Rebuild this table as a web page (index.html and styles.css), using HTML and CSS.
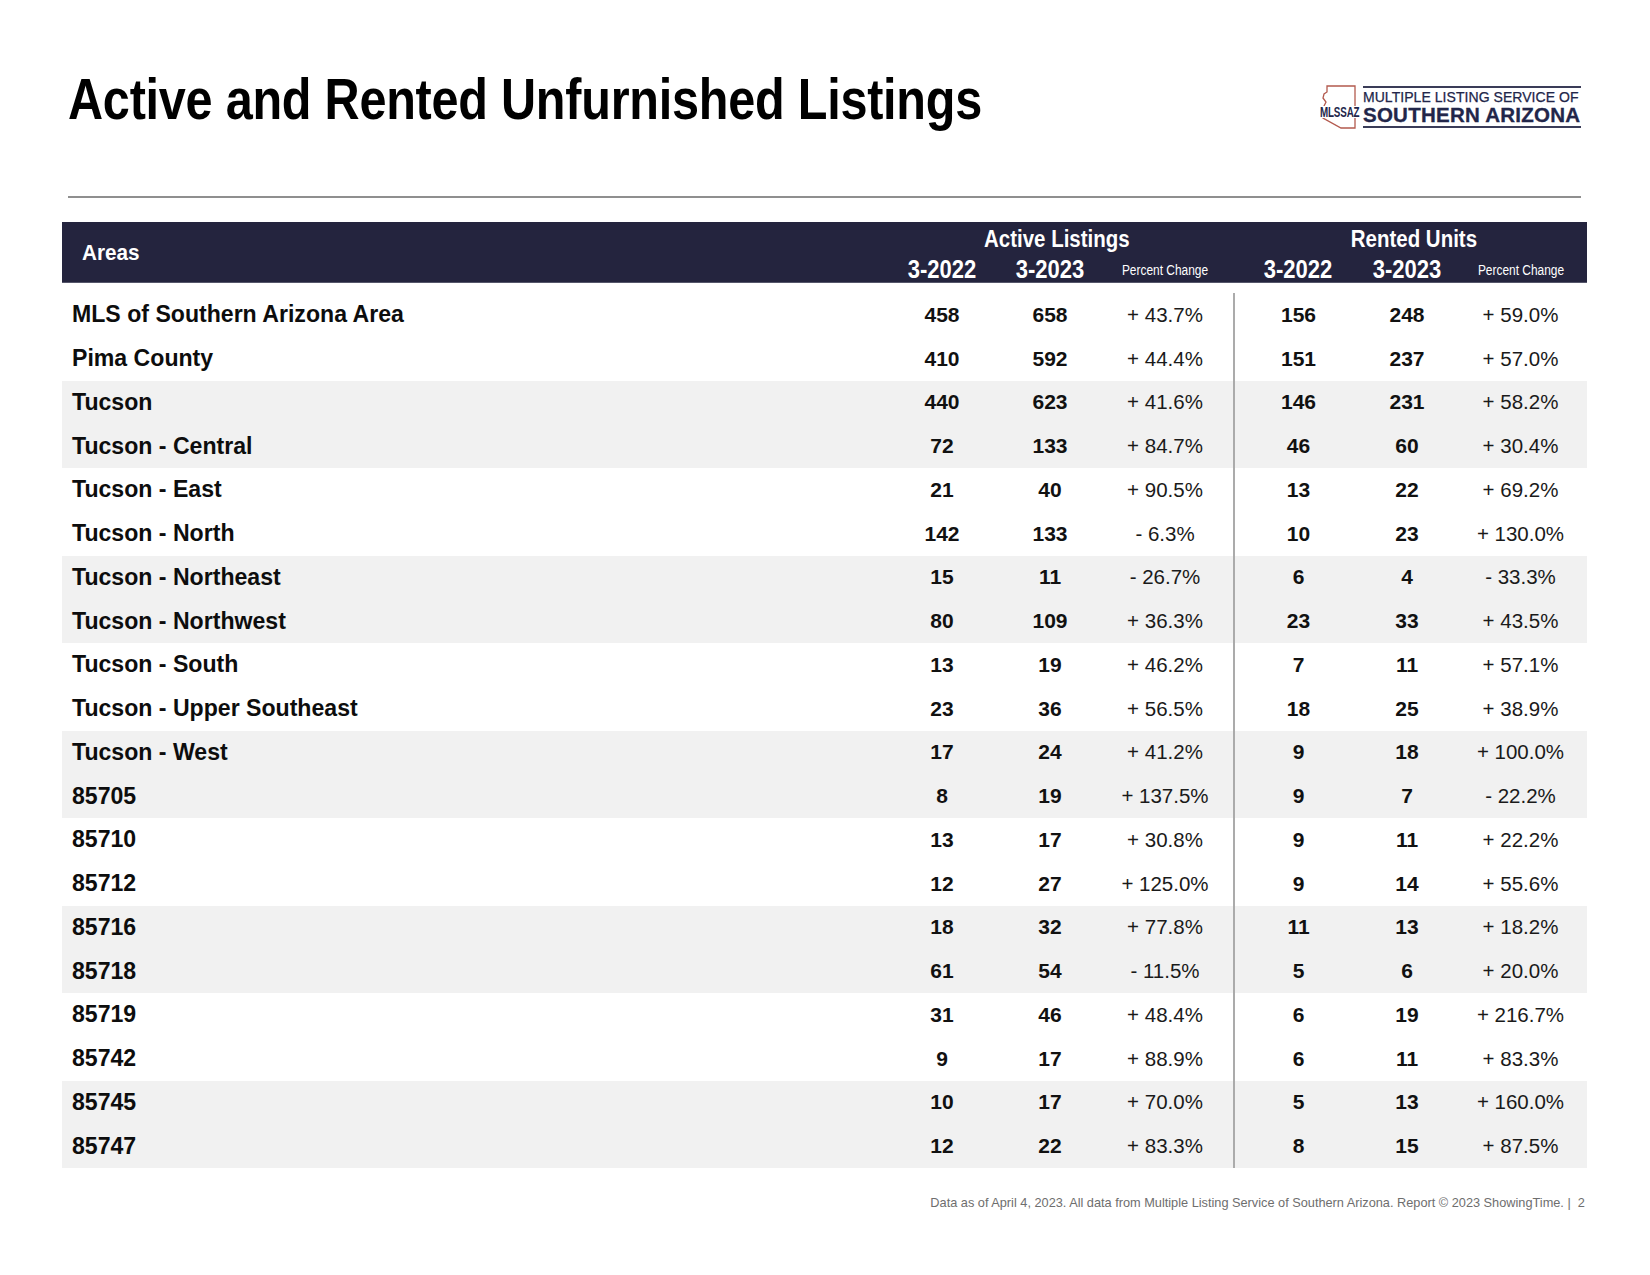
FILE: index.html
```html
<!DOCTYPE html>
<html lang="en">
<head>
<meta charset="utf-8">
<title>Active and Rented Unfurnished Listings</title>
<link rel="stylesheet" href="styles.css">
</head>
<body>
<div class="page">
  <header class="top">
    <h1 class="title"><span class="cond">Active and Rented Unfurnished Listings</span></h1>
    <div class="logo">
      <div class="logo-mark">
        <svg width="36" height="46" viewBox="0 0 36 46">
          <path d="M6,2 L34,2 L34,44 L20,44 L2,34 L2,31 L4,27 L3,22 L5,18 L2,14 L3,10 L6,8 Z" fill="none" stroke="#b35a4e" stroke-width="1.3"/>
        </svg>
        <span class="logo-abbr">MLSSAZ</span>
      </div>
      <div class="logo-text">
        <div class="logo-line1">MULTIPLE LISTING SERVICE OF</div>
        <div class="logo-line2">SOUTHERN ARIZONA</div>
      </div>
    </div>
  </header>
  <div class="rule"></div>

  <div class="table">
    <div class="thead">
      <div class="th-areas"><span class="cond-a">Areas</span></div>
      <div class="th-group g-active"><span class="cond-g">Active Listings</span></div>
      <div class="th-group g-rented"><span class="cond-g">Rented Units</span></div>
      <div class="th-year c1"><span class="cond-y">3-2022</span></div>
      <div class="th-year c2"><span class="cond-y">3-2023</span></div>
      <div class="th-pct c3"><span class="cond-p">Percent Change</span></div>
      <div class="th-year c4"><span class="cond-y">3-2022</span></div>
      <div class="th-year c5"><span class="cond-y">3-2023</span></div>
      <div class="th-pct c6"><span class="cond-p">Percent Change</span></div>
    </div>

    <div class="tbody">
      <div class="row"><div class="name">MLS of Southern Arizona Area</div><div class="num c1">458</div><div class="num c2">658</div><div class="pct c3">+ 43.7%</div><div class="num c4">156</div><div class="num c5">248</div><div class="pct c6">+ 59.0%</div></div>
      <div class="row"><div class="name">Pima County</div><div class="num c1">410</div><div class="num c2">592</div><div class="pct c3">+ 44.4%</div><div class="num c4">151</div><div class="num c5">237</div><div class="pct c6">+ 57.0%</div></div>
      <div class="row"><div class="name">Tucson</div><div class="num c1">440</div><div class="num c2">623</div><div class="pct c3">+ 41.6%</div><div class="num c4">146</div><div class="num c5">231</div><div class="pct c6">+ 58.2%</div></div>
      <div class="row"><div class="name">Tucson - Central</div><div class="num c1">72</div><div class="num c2">133</div><div class="pct c3">+ 84.7%</div><div class="num c4">46</div><div class="num c5">60</div><div class="pct c6">+ 30.4%</div></div>
      <div class="row"><div class="name">Tucson - East</div><div class="num c1">21</div><div class="num c2">40</div><div class="pct c3">+ 90.5%</div><div class="num c4">13</div><div class="num c5">22</div><div class="pct c6">+ 69.2%</div></div>
      <div class="row"><div class="name">Tucson - North</div><div class="num c1">142</div><div class="num c2">133</div><div class="pct c3">- 6.3%</div><div class="num c4">10</div><div class="num c5">23</div><div class="pct c6">+ 130.0%</div></div>
      <div class="row"><div class="name">Tucson - Northeast</div><div class="num c1">15</div><div class="num c2">11</div><div class="pct c3">- 26.7%</div><div class="num c4">6</div><div class="num c5">4</div><div class="pct c6">- 33.3%</div></div>
      <div class="row"><div class="name">Tucson - Northwest</div><div class="num c1">80</div><div class="num c2">109</div><div class="pct c3">+ 36.3%</div><div class="num c4">23</div><div class="num c5">33</div><div class="pct c6">+ 43.5%</div></div>
      <div class="row"><div class="name">Tucson - South</div><div class="num c1">13</div><div class="num c2">19</div><div class="pct c3">+ 46.2%</div><div class="num c4">7</div><div class="num c5">11</div><div class="pct c6">+ 57.1%</div></div>
      <div class="row"><div class="name">Tucson - Upper Southeast</div><div class="num c1">23</div><div class="num c2">36</div><div class="pct c3">+ 56.5%</div><div class="num c4">18</div><div class="num c5">25</div><div class="pct c6">+ 38.9%</div></div>
      <div class="row"><div class="name">Tucson - West</div><div class="num c1">17</div><div class="num c2">24</div><div class="pct c3">+ 41.2%</div><div class="num c4">9</div><div class="num c5">18</div><div class="pct c6">+ 100.0%</div></div>
      <div class="row"><div class="name">85705</div><div class="num c1">8</div><div class="num c2">19</div><div class="pct c3">+ 137.5%</div><div class="num c4">9</div><div class="num c5">7</div><div class="pct c6">- 22.2%</div></div>
      <div class="row"><div class="name">85710</div><div class="num c1">13</div><div class="num c2">17</div><div class="pct c3">+ 30.8%</div><div class="num c4">9</div><div class="num c5">11</div><div class="pct c6">+ 22.2%</div></div>
      <div class="row"><div class="name">85712</div><div class="num c1">12</div><div class="num c2">27</div><div class="pct c3">+ 125.0%</div><div class="num c4">9</div><div class="num c5">14</div><div class="pct c6">+ 55.6%</div></div>
      <div class="row"><div class="name">85716</div><div class="num c1">18</div><div class="num c2">32</div><div class="pct c3">+ 77.8%</div><div class="num c4">11</div><div class="num c5">13</div><div class="pct c6">+ 18.2%</div></div>
      <div class="row"><div class="name">85718</div><div class="num c1">61</div><div class="num c2">54</div><div class="pct c3">- 11.5%</div><div class="num c4">5</div><div class="num c5">6</div><div class="pct c6">+ 20.0%</div></div>
      <div class="row"><div class="name">85719</div><div class="num c1">31</div><div class="num c2">46</div><div class="pct c3">+ 48.4%</div><div class="num c4">6</div><div class="num c5">19</div><div class="pct c6">+ 216.7%</div></div>
      <div class="row"><div class="name">85742</div><div class="num c1">9</div><div class="num c2">17</div><div class="pct c3">+ 88.9%</div><div class="num c4">6</div><div class="num c5">11</div><div class="pct c6">+ 83.3%</div></div>
      <div class="row"><div class="name">85745</div><div class="num c1">10</div><div class="num c2">17</div><div class="pct c3">+ 70.0%</div><div class="num c4">5</div><div class="num c5">13</div><div class="pct c6">+ 160.0%</div></div>
      <div class="row"><div class="name">85747</div><div class="num c1">12</div><div class="num c2">22</div><div class="pct c3">+ 83.3%</div><div class="num c4">8</div><div class="num c5">15</div><div class="pct c6">+ 87.5%</div></div>
    </div>
  </div>

  <footer class="foot"><span class="cond-f">Data as of April 4, 2023. All data from Multiple Listing Service of Southern Arizona. Report © 2023 ShowingTime. | &nbsp;2</span></footer>
</div>
</body>
</html>
```

FILE: styles.css
```css
* { box-sizing: border-box; }
html, body { margin: 0; padding: 0; background: #fff; }
body { font-family: "Liberation Sans", Arial, sans-serif; color: #111; }

.page {
  width: 1650px;
  height: 1275px;
  padding: 0 63px 0 62px;
}

/* ---------- Top ---------- */
.top {
  height: 196px;
  padding: 70px 6px 0 6px;
  display: flex;
  justify-content: space-between;
  align-items: flex-start;
}
.title {
  margin: 0;
  font-size: 58px;
  line-height: 58px;
  font-weight: 700;
  letter-spacing: -0.3px;
  white-space: nowrap;
  color: #000;
}
.cond {
  display: inline-block;
  transform: scaleX(0.838);
  transform-origin: left center;
}

.logo {
  margin-top: 14px;
  display: flex;
  align-items: center;
  gap: 6px;
}
.logo-mark {
  position: relative;
  width: 36px;
  height: 46px;
}
.logo-mark svg { display: block; }
.logo-abbr {
  position: absolute;
  left: -1px;
  top: 22px;
  font-size: 14px;
  font-weight: 700;
  color: #22264a;
  background: #fff;
  line-height: 12px;
  display: inline-block;
  transform: scaleX(0.7);
  transform-origin: left center;
  letter-spacing: -0.2px;
}
.logo-text {
  border-top: 2px solid #3a3c58;
  border-bottom: 2px solid #3a3c58;
  padding: 2px 0 1px 0;
  width: 218px;
  color: #22264a;
}
.logo-line1 {
  font-size: 14px;
  line-height: 15px;
  letter-spacing: 0.05px;
  white-space: nowrap;
  -webkit-text-stroke: 0.25px #22264a;
}
.logo-line2 {
  font-size: 20.5px;
  line-height: 20px;
  font-weight: 700;
  letter-spacing: 0.25px;
  white-space: nowrap;
  -webkit-text-stroke: 0.3px #22264a;
}

.rule {
  height: 2px;
  margin: 0 6px;
  background: #8f8f8f;
}

/* ---------- Table ---------- */
.table { margin-top: 24px; }

.thead,
.row {
  display: grid;
  grid-template-columns: 826px 108px 108px 129px 129px 90px 135px;
}

.thead {
  height: 61px;
  background: #24243e;
  color: #fff;
  grid-template-rows: 31px 30px;
  border-bottom: 1px solid #55566a;
}
.th-areas {
  grid-row: 1 / 3;
  grid-column: 1;
  display: flex;
  align-items: center;
  padding-left: 20px;
  font-size: 22px;
  font-weight: 700;
}
.cond-a, .cond-g, .cond-y, .cond-p, .cond-f {
  display: inline-block;
  white-space: nowrap;
}
.cond-a { transform: scaleX(0.94); transform-origin: left center; }
.th-group {
  grid-row: 1;
  text-align: center;
  font-size: 23px;
  line-height: 31px;
  font-weight: 700;
  padding-top: 2px;
}
.g-active { grid-column: 2 / 5; padding-right: 7px; }
.g-rented { grid-column: 5 / 8; padding-left: 8px; }
.cond-g { transform: scaleX(0.89); }

.th-year, .th-pct { grid-row: 2; text-align: center; }
.th-year {
  font-size: 25px;
  line-height: 30px;
  font-weight: 700;
  padding-top: 1px;
}
.cond-y { transform: scaleX(0.88); }
.th-pct {
  font-size: 15.5px;
  line-height: 30px;
  padding-top: 2px;
}
.cond-p { transform: scaleX(0.77); }

.th-year.c1 { grid-column: 2; }
.th-year.c2 { grid-column: 3; }
.th-pct.c3 { grid-column: 4; padding-right: 7px; }
.th-year.c4 { grid-column: 5; }
.th-year.c5 { grid-column: 6; }
.th-pct.c6 { grid-column: 7; padding-left: 3px; }

.tbody { margin-top: 10px; }
.row {
  height: 43.75px;
  align-items: center;
}
.row:nth-child(4n+3),
.row:nth-child(4n+4) { background: #f1f1f1; }

.row > div {
  height: 100%;
  display: flex;
  align-items: center;
}
.name {
  padding-left: 10px;
  font-size: 23.1px;
  font-weight: 700;
  color: #0d0d0d;
  white-space: nowrap;
}
.num, .pct { justify-content: center; }
.num {
  font-size: 21px;
  font-weight: 700;
  color: #111;
}
.pct {
  font-size: 20.5px;
  color: #1a1a1a;
}
.row .c3 { padding-right: 7px; }
.row .c4 { border-left: 2px solid #ababab; }
.row .c6 { padding-left: 2px; }

/* ---------- Footer ---------- */
.foot {
  margin-top: 27px;
  text-align: right;
  padding-right: 2px;
  font-size: 13px;
  line-height: 16px;
  color: #6e6e6e;
}
.cond-f { transform: scaleX(0.98); transform-origin: right center; }
```
